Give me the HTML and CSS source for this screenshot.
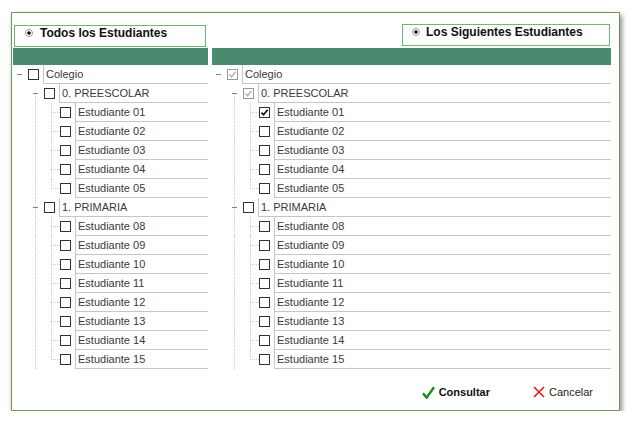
FILE: index.html
```html
<!DOCTYPE html>
<html>
<head>
    <title>Consultar Estudiantes</title>
    <link rel="stylesheet" href="styles.css">
</head>
<body>
    <div class="dialog">
        <div class="panels">
            <div class="panel panel-left">
                <div class="choice">
                    <span class="radio"></span>
                    <span>Todos los Estudiantes</span>
                </div>
                <div class="bar"></div>
                <div class="tree">
                    <div class="node"><span class="toggle"></span><span class="box"></span><span class="label">Colegio</span></div>
                    <div class="node"><span class="indent"></span><span class="toggle branch first"></span><span class="box"></span><span class="label">0. PREESCOLAR</span></div>
                    <div class="node"><span class="indent"></span><span class="indent line"></span><span class="elbow"></span><span class="box"></span><span class="label">Estudiante 01</span></div>
                    <div class="node"><span class="indent"></span><span class="indent line"></span><span class="elbow"></span><span class="box"></span><span class="label">Estudiante 02</span></div>
                    <div class="node"><span class="indent"></span><span class="indent line"></span><span class="elbow"></span><span class="box"></span><span class="label">Estudiante 03</span></div>
                    <div class="node"><span class="indent"></span><span class="indent line"></span><span class="elbow"></span><span class="box"></span><span class="label">Estudiante 04</span></div>
                    <div class="node"><span class="indent"></span><span class="indent line"></span><span class="elbow last"></span><span class="box"></span><span class="label">Estudiante 05</span></div>
                    <div class="node"><span class="indent"></span><span class="toggle branch"></span><span class="box"></span><span class="label">1. PRIMARIA</span></div>
                    <div class="node"><span class="indent"></span><span class="indent line"></span><span class="elbow"></span><span class="box"></span><span class="label">Estudiante 08</span></div>
                    <div class="node"><span class="indent"></span><span class="indent line"></span><span class="elbow"></span><span class="box"></span><span class="label">Estudiante 09</span></div>
                    <div class="node"><span class="indent"></span><span class="indent line"></span><span class="elbow"></span><span class="box"></span><span class="label">Estudiante 10</span></div>
                    <div class="node"><span class="indent"></span><span class="indent line"></span><span class="elbow"></span><span class="box"></span><span class="label">Estudiante 11</span></div>
                    <div class="node"><span class="indent"></span><span class="indent line"></span><span class="elbow"></span><span class="box"></span><span class="label">Estudiante 12</span></div>
                    <div class="node"><span class="indent"></span><span class="indent line"></span><span class="elbow"></span><span class="box"></span><span class="label">Estudiante 13</span></div>
                    <div class="node"><span class="indent"></span><span class="indent line"></span><span class="elbow"></span><span class="box"></span><span class="label">Estudiante 14</span></div>
                    <div class="node"><span class="indent"></span><span class="indent line"></span><span class="elbow last"></span><span class="box"></span><span class="label">Estudiante 15</span></div>
                </div>
            </div>

            <div class="panel panel-right">
                <div class="choice">
                    <span class="radio"></span>
                    <span>Los Siguientes Estudiantes</span>
                </div>
                <div class="bar"></div>
                <div class="tree">
                    <div class="node"><span class="toggle"></span><span class="box partial"><svg viewBox="0 0 9 9" width="9" height="9"><path d="M1.5 4.6 L3.6 6.8 L7.6 1.8" fill="none" stroke="#b4b4b4" stroke-width="1.5"/></svg></span><span class="label">Colegio</span></div>
                    <div class="node"><span class="indent"></span><span class="toggle branch first"></span><span class="box partial"><svg viewBox="0 0 9 9" width="9" height="9"><path d="M1.5 4.6 L3.6 6.8 L7.6 1.8" fill="none" stroke="#b4b4b4" stroke-width="1.5"/></svg></span><span class="label">0. PREESCOLAR</span></div>
                    <div class="node"><span class="indent"></span><span class="indent line"></span><span class="elbow"></span><span class="box"><svg viewBox="0 0 9 9" width="9" height="9"><path d="M1.5 4.6 L3.6 6.8 L7.6 1.8" fill="none" stroke="#111" stroke-width="1.7"/></svg></span><span class="label">Estudiante 01</span></div>
                    <div class="node"><span class="indent"></span><span class="indent line"></span><span class="elbow"></span><span class="box"></span><span class="label">Estudiante 02</span></div>
                    <div class="node"><span class="indent"></span><span class="indent line"></span><span class="elbow"></span><span class="box"></span><span class="label">Estudiante 03</span></div>
                    <div class="node"><span class="indent"></span><span class="indent line"></span><span class="elbow"></span><span class="box"></span><span class="label">Estudiante 04</span></div>
                    <div class="node"><span class="indent"></span><span class="indent line"></span><span class="elbow last"></span><span class="box"></span><span class="label">Estudiante 05</span></div>
                    <div class="node"><span class="indent"></span><span class="toggle branch"></span><span class="box"></span><span class="label">1. PRIMARIA</span></div>
                    <div class="node"><span class="indent"></span><span class="indent line"></span><span class="elbow"></span><span class="box"></span><span class="label">Estudiante 08</span></div>
                    <div class="node"><span class="indent"></span><span class="indent line"></span><span class="elbow"></span><span class="box"></span><span class="label">Estudiante 09</span></div>
                    <div class="node"><span class="indent"></span><span class="indent line"></span><span class="elbow"></span><span class="box"></span><span class="label">Estudiante 10</span></div>
                    <div class="node"><span class="indent"></span><span class="indent line"></span><span class="elbow"></span><span class="box"></span><span class="label">Estudiante 11</span></div>
                    <div class="node"><span class="indent"></span><span class="indent line"></span><span class="elbow"></span><span class="box"></span><span class="label">Estudiante 12</span></div>
                    <div class="node"><span class="indent"></span><span class="indent line"></span><span class="elbow"></span><span class="box"></span><span class="label">Estudiante 13</span></div>
                    <div class="node"><span class="indent"></span><span class="indent line"></span><span class="elbow"></span><span class="box"></span><span class="label">Estudiante 14</span></div>
                    <div class="node"><span class="indent"></span><span class="indent line"></span><span class="elbow last"></span><span class="box"></span><span class="label">Estudiante 15</span></div>
                </div>
            </div>
        </div>

        <div class="actions">
            <span class="action primary">
                <svg width="13" height="13" viewBox="0 0 13 13"><path d="M1 7.2 L4.6 11.6 L12 1.2" fill="none" stroke="#1c8a1c" stroke-width="2.4"/></svg>
                Consultar
            </span>
            <span class="action">
                <svg width="12" height="12" viewBox="0 0 12 12"><path d="M1 1 L11 11 M11 1 L1 11" fill="none" stroke="#e31c1c" stroke-width="1.6"/></svg>
                Cancelar
            </span>
        </div>
    </div>
</body>
</html>
```

FILE: styles.css
```css
body {
    margin: 0;
    font-family: "Liberation Sans", Arial, sans-serif;
    background-color: #fff;
}

.dialog {
    box-sizing: border-box;
    width: 609px;
    height: 399px;
    margin: 12px 0 0 11px;
    padding: 12px 8px 0 1px;
    border: 1px solid #6b9a4e;
    background-color: #fff;
    box-shadow: 2px 3px 5px rgba(0, 0, 0, 0.45);
}

.panels {
    display: flex;
    gap: 4px;
}

.panel-left {
    width: 195px;
}

.panel-right {
    width: 399px;
}

/* radio header boxes */
.choice {
    box-sizing: border-box;
    display: flex;
    align-items: flex-start;
    gap: 7px;
    height: 22px;
    margin-bottom: 1px;
    padding-left: 10px;
    border: 1px solid #60c06e;
    font-size: 12px;
    font-weight: bold;
    line-height: 14px;
    color: #111;
}

.panel-left .choice {
    width: 192px;
    margin-left: 1px;
}

.panel-right .choice {
    width: 208px;
    margin: -1px 1px 2px auto;
    padding-left: 9px;
    gap: 6px;
}

.radio {
    flex: none;
    box-sizing: border-box;
    width: 8px;
    height: 8px;
    margin-top: 3px;
    border: 1px solid #999;
    border-radius: 50%;
    background: radial-gradient(circle, #000 0 1.4px, #fff 1.9px);
}

.bar {
    height: 17px;
    background-color: #4a8a70;
}

/* tree */
.tree {
    height: 304px;
    overflow: hidden;
    font-size: 11px;
    color: #3a3a3a;
}

.node {
    display: flex;
    height: 19px;
}

.indent {
    position: relative;
    flex: none;
    width: 16px;
}

.toggle,
.elbow {
    position: relative;
    flex: none;
    width: 15px;
}

.indent.line::before,
.toggle.branch::before,
.elbow::before {
    content: "";
    position: absolute;
    left: 6px;
    top: 0;
    bottom: 0;
    border-left: 1px dotted #cdcdcd;
}

.toggle.first::before {
    top: 9px;
}

.elbow.last::before {
    bottom: auto;
    height: 10px;
}

.elbow::after {
    content: "";
    position: absolute;
    left: 6px;
    top: 9px;
    width: 9px;
    border-top: 1px dotted #cdcdcd;
}

.toggle::after {
    content: "";
    position: absolute;
    left: 4px;
    top: 9px;
    width: 5px;
    height: 1px;
    background-color: #808080;
}

.box {
    flex: none;
    box-sizing: border-box;
    width: 11px;
    height: 11px;
    margin: 4px 4px 0 0;
    border: 1px solid #333;
    background-color: #fff;
}

.box svg {
    display: block;
}

.box.partial {
    border-color: #9a9a9a;
}

.label {
    flex: 1;
    padding: 1px 0 0 2px;
    line-height: 17px;
    border-left: 1px solid #c6c6c6;
    border-bottom: 1px solid #c6c6c6;
    white-space: nowrap;
}

/* bottom buttons */
.actions {
    display: flex;
    justify-content: flex-end;
    align-items: center;
    gap: 43px;
    height: 18px;
    margin-top: 14px;
    padding-right: 18px;
    font-size: 11px;
}

.action {
    display: flex;
    align-items: center;
    gap: 4px;
    color: #222;
}

.action.primary {
    font-weight: bold;
    color: #111;
}

.action svg {
    display: block;
}
```
